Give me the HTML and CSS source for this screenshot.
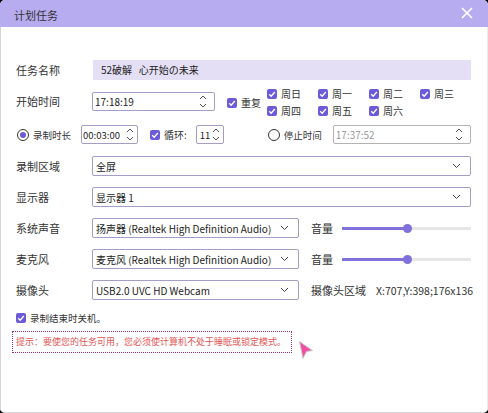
FILE: index.html
```html
<!DOCTYPE html>
<html>
<head>
	<meta charset="utf-8">
	<title>计划任务</title>
	<link rel="stylesheet" href="styles.css">
</head>
<body>
<div class="window">
	<div class="titleBar">
		<span class="title">计划任务</span>
		<svg class="closeIcon" width="12" height="12" viewBox="0 0 12 12"><path d="M1 1 L11 11 M11 1 L1 11" stroke="#fff" stroke-width="1.6" fill="none"/></svg>
	</div>

	<div class="content">
		<div class="row rowName">
			<span class="label">任务名称</span>
			<div class="nameBox">52破解&nbsp;&nbsp;&nbsp;心开始の未来</div>
		</div>

		<div class="row rowStart">
			<span class="label">开始时间</span>
			<div class="field startTime">
				<span class="value">17:18:19</span>
				<svg class="spinner" width="8" height="15" viewBox="0 0 8 15"><path d="M1 5 L4 2 L7 5 M1 10 L4 13 L7 10" stroke="#555" stroke-width="1" fill="none"/></svg>
			</div>
			<div class="check repeat">
				<span class="box"><svg width="10" height="10" viewBox="0 0 10 10"><path d="M2.2 5.2 L4.2 7.2 L7.8 3" stroke="#fff" stroke-width="1.3" fill="none"/></svg></span>
				<span>重复</span>
			</div>
			<div class="weekGrid">
				<div class="check"><span class="box"><svg width="10" height="10" viewBox="0 0 10 10"><path d="M2.2 5.2 L4.2 7.2 L7.8 3" stroke="#fff" stroke-width="1.3" fill="none"/></svg></span><span>周日</span></div>
				<div class="check"><span class="box"><svg width="10" height="10" viewBox="0 0 10 10"><path d="M2.2 5.2 L4.2 7.2 L7.8 3" stroke="#fff" stroke-width="1.3" fill="none"/></svg></span><span>周一</span></div>
				<div class="check"><span class="box"><svg width="10" height="10" viewBox="0 0 10 10"><path d="M2.2 5.2 L4.2 7.2 L7.8 3" stroke="#fff" stroke-width="1.3" fill="none"/></svg></span><span>周二</span></div>
				<div class="check"><span class="box"><svg width="10" height="10" viewBox="0 0 10 10"><path d="M2.2 5.2 L4.2 7.2 L7.8 3" stroke="#fff" stroke-width="1.3" fill="none"/></svg></span><span>周三</span></div>
				<div class="check"><span class="box"><svg width="10" height="10" viewBox="0 0 10 10"><path d="M2.2 5.2 L4.2 7.2 L7.8 3" stroke="#fff" stroke-width="1.3" fill="none"/></svg></span><span>周四</span></div>
				<div class="check"><span class="box"><svg width="10" height="10" viewBox="0 0 10 10"><path d="M2.2 5.2 L4.2 7.2 L7.8 3" stroke="#fff" stroke-width="1.3" fill="none"/></svg></span><span>周五</span></div>
				<div class="check"><span class="box"><svg width="10" height="10" viewBox="0 0 10 10"><path d="M2.2 5.2 L4.2 7.2 L7.8 3" stroke="#fff" stroke-width="1.3" fill="none"/></svg></span><span>周六</span></div>
			</div>
		</div>

		<div class="row rowDuration">
			<div class="radio checked"><span class="dot"></span></div>
			<span class="small durLabel">录制时长</span>
			<div class="field duration">
				<span class="value">00:03:00</span>
				<svg class="spinner" width="8" height="15" viewBox="0 0 8 15"><path d="M1 5 L4 2 L7 5 M1 10 L4 13 L7 10" stroke="#555" stroke-width="1" fill="none"/></svg>
			</div>
			<div class="check loop">
				<span class="box"><svg width="10" height="10" viewBox="0 0 10 10"><path d="M2.2 5.2 L4.2 7.2 L7.8 3" stroke="#fff" stroke-width="1.3" fill="none"/></svg></span>
				<span>循环:</span>
			</div>
			<div class="field loopCount">
				<span class="value">11</span>
				<svg class="spinner" width="8" height="15" viewBox="0 0 8 15"><path d="M1 5 L4 2 L7 5 M1 10 L4 13 L7 10" stroke="#555" stroke-width="1" fill="none"/></svg>
			</div>
			<div class="radio stopRadio"></div>
			<span class="small stopLabel">停止时间</span>
			<div class="field stopTime disabled">
				<span class="value">17:37:52</span>
				<svg class="spinner" width="8" height="15" viewBox="0 0 8 15"><path d="M1 5 L4 2 L7 5 M1 10 L4 13 L7 10" stroke="#555" stroke-width="1" fill="none"/></svg>
			</div>
		</div>

		<div class="row">
			<span class="label">录制区域</span>
			<div class="field select wide">
				<span class="value">全屏</span>
				<svg class="arrow" width="9" height="6" viewBox="0 0 9 6"><path d="M1 1 L4.5 4.5 L8 1" stroke="#444" stroke-width="1" fill="none"/></svg>
			</div>
		</div>

		<div class="row">
			<span class="label">显示器</span>
			<div class="field select wide">
				<span class="value">显示器 1</span>
				<svg class="arrow" width="9" height="6" viewBox="0 0 9 6"><path d="M1 1 L4.5 4.5 L8 1" stroke="#444" stroke-width="1" fill="none"/></svg>
			</div>
		</div>

		<div class="row">
			<span class="label">系统声音</span>
			<div class="field select half">
				<span class="value">扬声器 (Realtek High Definition Audio)</span>
				<svg class="arrow" width="9" height="6" viewBox="0 0 9 6"><path d="M1 1 L4.5 4.5 L8 1" stroke="#444" stroke-width="1" fill="none"/></svg>
			</div>
			<span class="sideLabel">音量</span>
			<div class="slider"><div class="sliderFill"></div><div class="thumb"></div></div>
		</div>

		<div class="row">
			<span class="label">麦克风</span>
			<div class="field select half">
				<span class="value">麦克风 (Realtek High Definition Audio)</span>
				<svg class="arrow" width="9" height="6" viewBox="0 0 9 6"><path d="M1 1 L4.5 4.5 L8 1" stroke="#444" stroke-width="1" fill="none"/></svg>
			</div>
			<span class="sideLabel">音量</span>
			<div class="slider"><div class="sliderFill"></div><div class="thumb"></div></div>
		</div>

		<div class="row">
			<span class="label">摄像头</span>
			<div class="field select half">
				<span class="value">USB2.0 UVC HD Webcam</span>
				<svg class="arrow" width="9" height="6" viewBox="0 0 9 6"><path d="M1 1 L4.5 4.5 L8 1" stroke="#444" stroke-width="1" fill="none"/></svg>
			</div>
			<span class="sideLabel">摄像头区域</span>
			<span class="camArea">X:707,Y:398;176x136</span>
		</div>

		<div class="row rowShutdown">
			<div class="check">
				<span class="box"><svg width="10" height="10" viewBox="0 0 10 10"><path d="M2.2 5.2 L4.2 7.2 L7.8 3" stroke="#fff" stroke-width="1.3" fill="none"/></svg></span>
				<span>录制结束时关机。</span>
			</div>
		</div>

		<div class="hintRow">
			<div class="hint">提示：要使您的任务可用，您必须使计算机不处于睡眠或锁定模式。</div>
			<svg class="cursor" width="16" height="20" viewBox="0 0 16 20"><path d="M1.5 1.5 L14.5 10.5 L8.5 11.5 L5 18.5 Z" fill="#f04fa3" stroke="#c9c9c9" stroke-width="1"/></svg>
		</div>
	</div>
</div>
</body>
</html>
```

FILE: styles.css
```css
html, body {
	margin: 0;
	padding: 0;
	background: #000;
}

body {
	font-family: "Noto Sans CJK SC", "Noto Sans", sans-serif;
	color: #333;
}

.window {
	width: 488px;
	height: 413px;
	background: #fff;
	border-radius: 5px;
	overflow: hidden;
	display: flex;
	flex-direction: column;
}

.titleBar {
	height: 27px;
	background: #b8acf1;
	display: flex;
	align-items: center;
	justify-content: space-between;
	padding: 0 15px 0 14px;
	flex-shrink: 0;
}

.title {
	font-size: 11px;
	color: #333;
	padding-top: 2px;
}

.closeIcon {
	margin-top: -1px;
}

.content {
	flex: 1;
	padding: 33px 16px 0 15px;
	border-left: 1px solid #d4d4d8;
	border-right: 1px solid #ececec;
	border-bottom: 1px solid #d4d4d8;
}

.row {
	display: flex;
	align-items: center;
	height: 20px;
	margin-bottom: 11px;
	font-size: 10px;
}

.label {
	width: 76px;
	flex-shrink: 0;
	font-size: 11px;
	color: #333;
}

.nameBox {
	flex: 1;
	height: 20px;
	line-height: 20px;
	background: #e4dff4;
	padding-left: 8px;
	margin-left: 1px;
	font-size: 10px;
	color: #222;
}

.field {
	height: 19px;
	box-sizing: border-box;
	border: 1px solid #a49ec6;
	border-radius: 2px;
	display: flex;
	align-items: center;
	justify-content: space-between;
	padding: 0 7px 0 2px;
	background: #fff;
	color: #222;
	font-size: 10px;
}

.field .value {
	white-space: nowrap;
	overflow: hidden;
}

.startTime {
	width: 132px;
}

.spinner {
	flex-shrink: 0;
}

.check {
	display: flex;
	align-items: center;
	font-size: 10px;
	color: #333;
	white-space: nowrap;
}

.check .box {
	width: 10px;
	height: 10px;
	border-radius: 2px;
	background: #6c5bd9;
	margin-right: 4px;
	display: flex;
	flex-shrink: 0;
}

.repeat {
	margin-left: 12px;
	margin-top: 3px;
}

.weekGrid {
	display: grid;
	grid-template-columns: repeat(4, 51px);
	row-gap: 2px;
	margin-left: 6px;
	margin-top: 2px;
}

.rowStart {
	margin-bottom: 14px;
}

.rowDuration {
	height: 19px;
	margin-left: 1px;
	margin-bottom: 12px;
}

.radio {
	width: 10px;
	height: 10px;
	border: 1px solid #333;
	border-radius: 50%;
	display: flex;
	align-items: center;
	justify-content: center;
	flex-shrink: 0;
}

.radio .dot {
	width: 6px;
	height: 6px;
	border-radius: 50%;
	background: #6c5bd9;
}

.small {
	font-size: 9.5px;
	color: #333;
	white-space: nowrap;
}

.durLabel {
	margin-left: 4px;
}

.duration {
	width: 57px;
	margin-left: 10px;
	padding: 0 3px 0 1px;
	font-size: 9.5px;
}

.loop {
	margin-left: 12px;
}

.loopCount {
	width: 28px;
	margin-left: 9px;
	padding: 0 3px 0 3px;
	font-size: 9.5px;
}

.stopRadio {
	margin-left: 44px;
}

.stopLabel {
	margin-left: 4px;
}

.stopTime {
	flex: 1;
	margin-left: 11px;
	color: #999;
	border-color: #b3b3b3;
}

.select {
	height: 20px;
	padding-right: 9px;
	padding-left: 3px;
}

.wide {
	flex: 1;
}

.half {
	width: 207px;
	flex-shrink: 0;
}

.half .value {
	width: 184px;
}

.arrow {
	flex-shrink: 0;
}

.sideLabel {
	font-size: 11px;
	color: #333;
	margin-left: 12px;
	white-space: nowrap;
}

.slider {
	flex: 1;
	height: 3px;
	background: #e6e6e6;
	margin-left: 9px;
	position: relative;
	display: flex;
}

.sliderFill {
	width: 66px;
	background: #7f71dc;
}

.thumb {
	position: absolute;
	left: 61px;
	top: -3px;
	width: 9px;
	height: 9px;
	border-radius: 50%;
	background: #7f71dc;
}

.camArea {
	font-size: 10.5px;
	color: #333;
	margin-left: 10px;
	white-space: nowrap;
}

.rowShutdown {
	height: 14px;
	margin-top: 9px;
	margin-bottom: 6px;
}

.rowShutdown .check span:last-child {
	font-size: 9.5px;
}

.hintRow {
	display: flex;
	align-items: flex-start;
	margin-left: -4px;
}

.hint {
	border: 1px dotted #a8307f;
	padding: 0 5px 0 3px;
	height: 20px;
	line-height: 20px;
	font-size: 9px;
	color: #e35555;
	white-space: nowrap;
}

.cursor {
	margin-left: 6px;
	margin-top: 9px;
}
```
